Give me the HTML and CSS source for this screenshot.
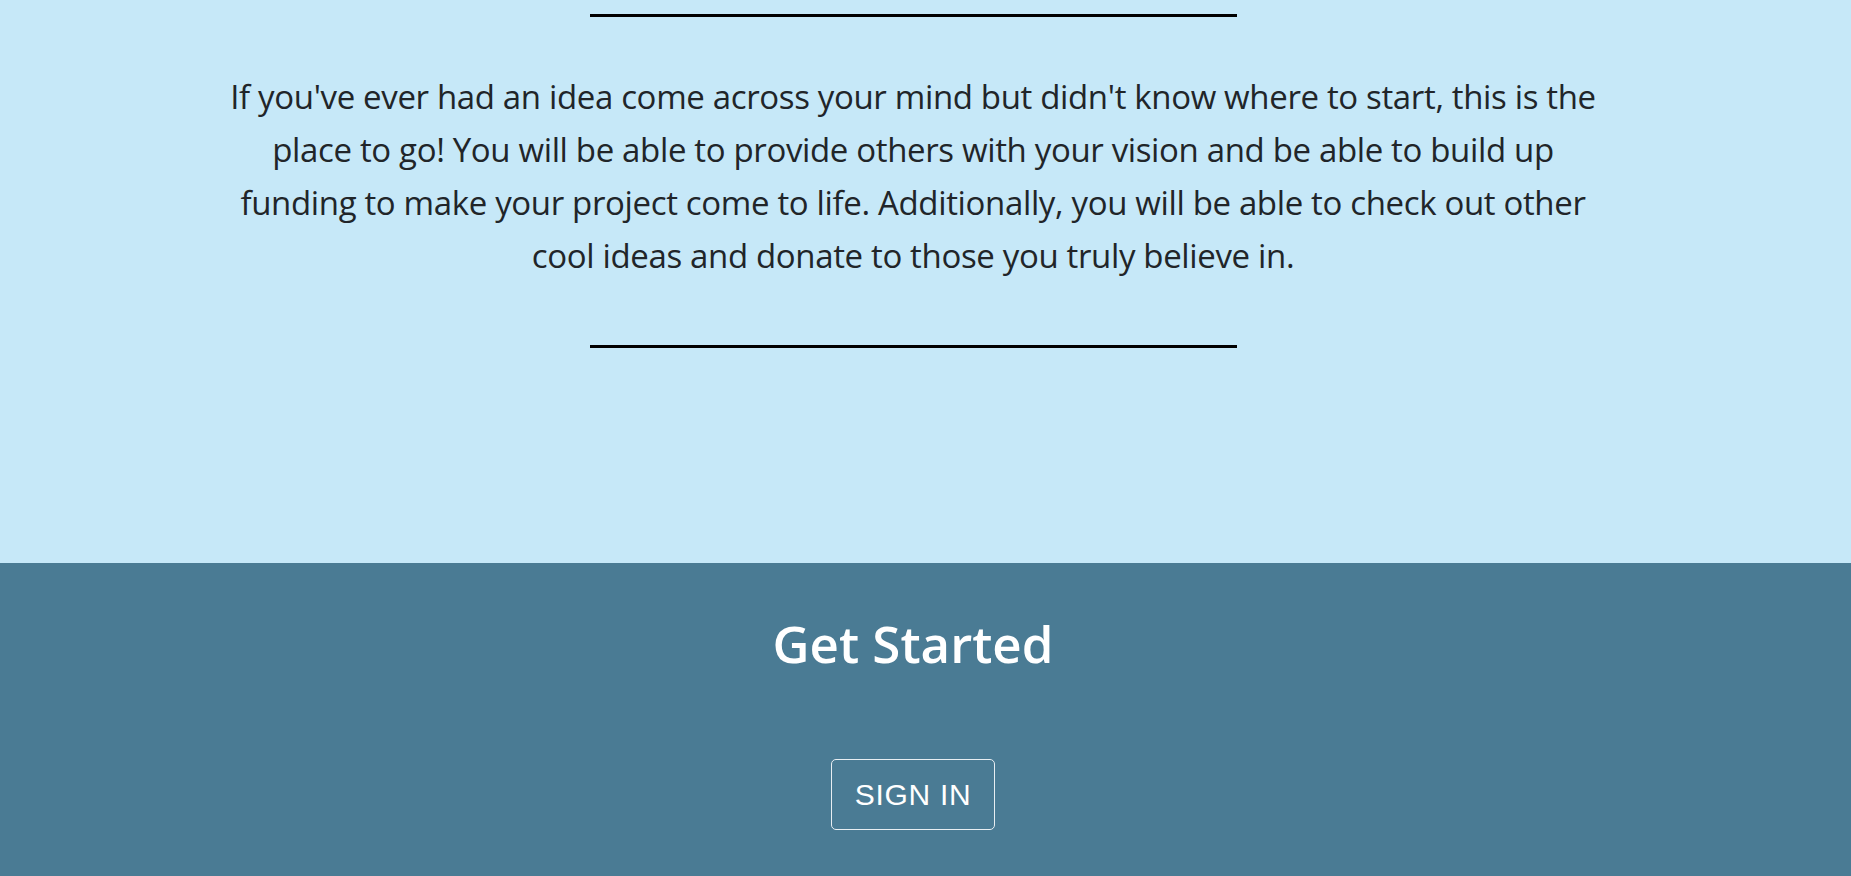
FILE: index.html
```html
<!DOCTYPE html>
<html lang="en">
<head>
<meta charset="utf-8">
<title>About</title>
<link rel="stylesheet" href="styles.css">
</head>
<body>
<section class="about">
  <hr class="rule rule-top">
  <p class="intro">If you've ever had an idea come across your mind but didn't know where to start, this is the place to go! You will be able to provide others with your vision and be able to build up funding to make your project come to life. Additionally, you will be able to check out other cool ideas and donate to those you truly believe in.</p>
  <hr class="rule rule-bottom">
</section>
<section class="start">
  <h2 class="start-title">Get Started</h2>
  <a class="signin" href="#">SIGN IN</a>
</section>
</body>
</html>
```

FILE: styles.css
```css
* { box-sizing: border-box; }
html, body { margin: 0; padding: 0; }
body {
  font-family: "Open Sans", "Noto Sans", sans-serif;
  color: #212529;
  background: #4a7b94;
}
.about {
  background: #c6e8f8;
  height: 563px;
  padding: 14px 25px 0 0;
  display: flex;
  flex-direction: column;
  align-items: center;
}
.rule {
  width: 647px;
  height: 3px;
  margin: 0;
  border: 0;
  background: #000;
}
.intro {
  width: 1375px;
  margin: 53px 0 0;
  text-align: center;
  font-size: 33px;
  font-weight: 500;
  line-height: 53px;
  letter-spacing: -0.35px;
}
.rule-bottom { margin-top: 63px; }
.start {
  height: 313px;
  background: #4a7b94;
  display: flex;
  flex-direction: column;
  align-items: center;
  padding: 47px 25px 0 0;
}
.start-title {
  margin: 0;
  color: #fff;
  font-size: 51px;
  font-weight: 600;
  line-height: 67px;
}
.signin {
  margin-top: 82px;
  display: inline-block;
  color: #fff;
  text-decoration: none;
  font-family: "Liberation Sans", Arial, sans-serif;
  font-size: 30px;
  letter-spacing: 0.7px;
  line-height: 35px;
  padding: 17px 23px;
  border: 1px solid #e8eef2;
  border-radius: 5px;
}
```
